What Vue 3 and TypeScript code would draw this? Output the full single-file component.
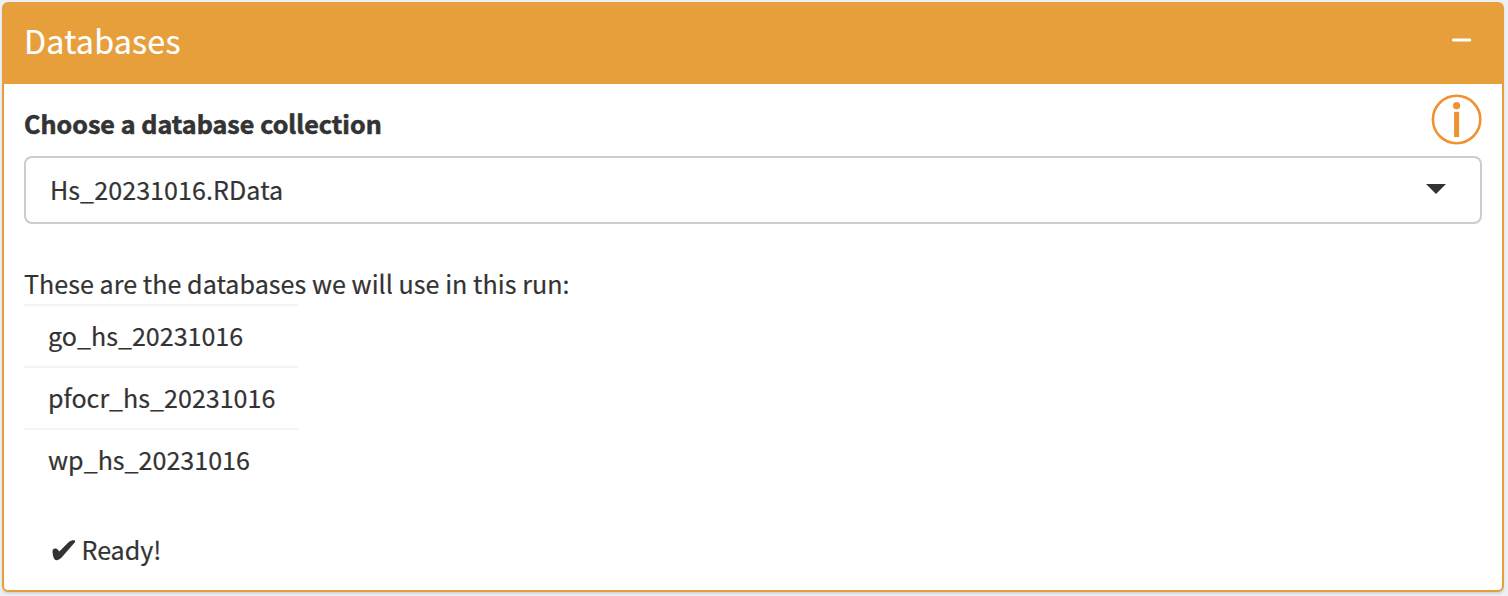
<script setup lang="ts">
import { ref } from 'vue'

const collection = ref<string>('Hs_20231016.RData')
const databases: string[] = ['go_hs_20231016', 'pfocr_hs_20231016', 'wp_hs_20231016']
</script>

<template>
  <main class="page">
    <section class="box">
      <header class="box-header">
        <h3 class="title">Databases</h3>
        <svg class="minus" width="20" height="4" viewBox="0 0 20 4" aria-label="Collapse">
          <rect x="0" y="0.4" width="19.2" height="3.2" rx="1.4" fill="#fff" />
        </svg>
      </header>
      <div class="box-body">
        <div class="label-row">
          <label class="label">Choose a database collection</label>
          <svg class="info" width="52" height="52" viewBox="0 0 52 52" aria-label="Info">
            <circle cx="25.6" cy="25.5" r="23.7" fill="none" stroke="#f09232" stroke-width="2.6" />
            <circle cx="25.6" cy="11.7" r="3.6" fill="#f09232" />
            <rect x="23.1" y="17.9" width="5" height="25.2" fill="#f09232" />
          </svg>
        </div>
        <div class="select">
          <span class="value">{{ collection }}</span>
          <svg class="caret" width="20" height="10" viewBox="0 0 20 10">
            <path d="M0 0H20L10 10Z" fill="#333" />
          </svg>
        </div>
        <p class="intro">These are the databases we will use in this run:</p>
        <ul class="list">
          <li v-for="db in databases" :key="db">{{ db }}</li>
        </ul>
        <div class="ready">
          <svg class="check" width="24" height="21" viewBox="0 0 24 21">
            <path d="M.7 9.9C1.8 8.2 4.6 8 5.7 9.6L7.3 11.5L16.8 2C18.5.5 20.7 0 22.4.2C23.2.4 23.3 1.6 22.7 2.6L9.4 17.8C7 20.3 4 21 2.8 19.6C1.2 17.7.2 12.8.7 9.9Z" fill="#333" />
          </svg>
          <span>Ready!</span>
        </div>
      </div>
    </section>
  </main>
</template>

<style>
html,
body {
  margin: 0;
  background: #ecf0f5;
}
</style>

<style scoped>
.page {
  box-sizing: border-box;
  height: 596px;
  padding: 2px 4px 4px 2px;
  overflow: hidden;
  background: #ecf0f5;
  color: #333;
  font-family: "Noto Sans CJK SC", "Noto Sans", sans-serif;
  font-size: 25.07px;
  line-height: 40px;
  -webkit-text-stroke: 0.2px currentColor;
}
.box {
  box-sizing: border-box;
  height: 590px;
  border: 2px solid #e69f3a;
  border-radius: 6px;
  background: #fff;
  box-shadow: 0 2px 2px rgba(0, 0, 0, 0.1);
}
.box-header {
  display: flex;
  justify-content: space-between;
  height: 80px;
  padding: 0 30px 0 20px;
  background: #e69f3a;
  color: #fff;
}
.title {
  margin: 16px 0 0;
  font-size: 32.23px;
  font-weight: 400;
  line-height: 40px;
  letter-spacing: 0.2px;
}
.minus {
  margin-top: 34px;
}
.box-body {
  padding: 0 20px;
}
.label-row {
  display: flex;
  justify-content: space-between;
  height: 72px;
}
.label {
  margin-top: 19px;
  font-weight: 700;
  letter-spacing: 0.04px;
  -webkit-text-stroke: 0.6px currentColor;
}
.info {
  margin: 10px -1px 0 0;
}
.select {
  box-sizing: border-box;
  display: flex;
  justify-content: space-between;
  height: 68px;
  padding: 11px 34px 0 24px;
  border: 2px solid #ccc;
  border-radius: 8px;
}
.value {
  letter-spacing: 0.07px;
}
.caret {
  margin-top: 15px;
}
.intro {
  margin: 39px 0 1px;
  letter-spacing: 0.04px;
}
.list {
  width: 275px;
  margin: 0;
  padding: 0;
  list-style: none;
}
.list li {
  box-sizing: border-box;
  height: 62px;
  padding: 9px 24px 0;
  border-top: 2px solid #f4f4f4;
}
.ready {
  display: flex;
  gap: 5.5px;
  margin: 39px 0 0 28px;
}
.check {
  margin-top: 11px;
}
</style>
